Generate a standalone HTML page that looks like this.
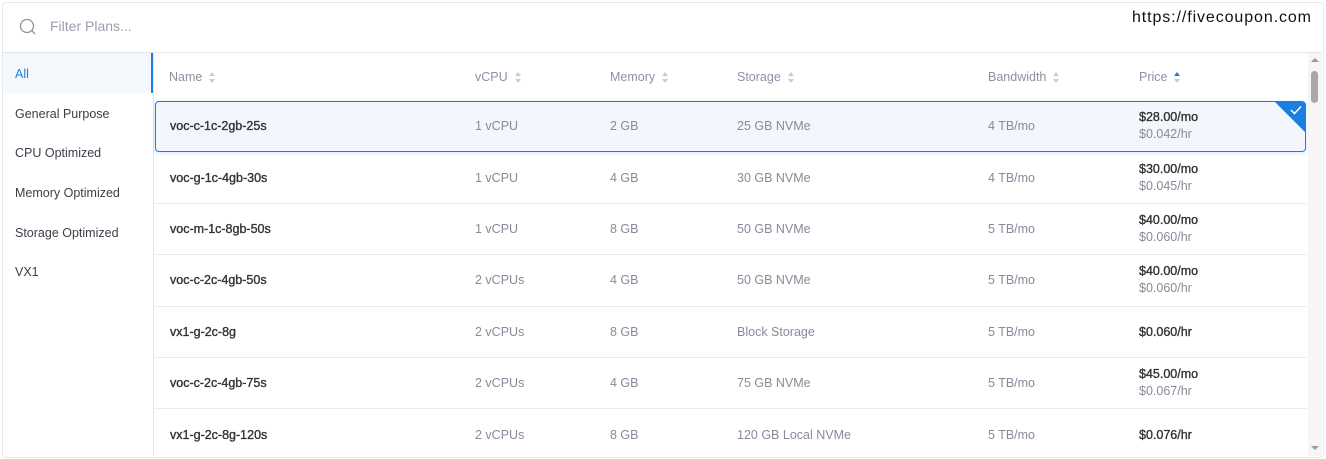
<!DOCTYPE html><html><head><style>
body{margin:0;width:1326px;height:459px;background:#fff;font-family:"Liberation Sans",sans-serif;font-size:12.5px;position:relative;overflow:hidden}
.a{position:absolute;white-space:nowrap}
.box{position:absolute;left:2px;top:2px;width:1320px;height:454px;border:1px solid #e6e8ec;border-radius:4px}
.g{color:#868b9a}.d{color:#333;-webkit-text-stroke:0.35px #333}
.h{color:#8c91a3}
.sep{position:absolute;left:154px;width:1153px;height:1px;background:#e9ebef}
.s{display:inline-block;vertical-align:middle;margin-left:7px;width:6px;height:11px;position:relative}
.s:before,.s:after{content:"";position:absolute;left:0;border-left:3px solid transparent;border-right:3px solid transparent}
.s:before{top:0;border-bottom:4px solid #c9ccd4}.s:after{bottom:0;border-top:4px solid #c9ccd4}
.s.up:before{border-bottom-color:#1a7fe0}
</style></head><body>
<div class="box"></div>
<svg class="a" style="left:18px;top:17px" width="20" height="20" viewBox="0 0 20 20"><circle cx="9" cy="9" r="6.5" fill="none" stroke="#8f939e" stroke-width="1.3"/><line x1="13.7" y1="13.7" x2="17" y2="17" stroke="#8f939e" stroke-width="1.3"/></svg>
<div class="a" style="left:50px;top:18px;font-size:14px;color:#9aa0ae">Filter Plans...</div>
<div class="a" style="left:1132px;top:9px;font-size:16px;letter-spacing:0.9px;color:#111">https://fivecoupon.com</div>
<div class="a" style="left:3px;top:52px;width:1319px;height:1px;background:#e3e5ea"></div>
<div class="a" style="left:3px;top:53px;width:148px;height:40px;background:#f4f8fd"></div>
<div class="a" style="left:151px;top:53px;width:2px;height:40px;background:#1a7fe0"></div>
<div class="a" style="left:153px;top:53px;width:1px;height:403px;background:#e3e5ea"></div>
<div class="a" style="left:15px;top:67px;color:#1a7fe0">All</div>
<div class="a" style="left:15px;top:107px;color:#3b3f48">General Purpose</div>
<div class="a" style="left:15px;top:146px;color:#3b3f48">CPU Optimized</div>
<div class="a" style="left:15px;top:186px;color:#3b3f48">Memory Optimized</div>
<div class="a" style="left:15px;top:226px;color:#3b3f48">Storage Optimized</div>
<div class="a" style="left:15px;top:265px;color:#3b3f48">VX1</div>
<div class="a h" style="left:169px;top:70px">Name<span class="s"></span></div>
<div class="a h" style="left:475px;top:70px">vCPU<span class="s"></span></div>
<div class="a h" style="left:610px;top:70px">Memory<span class="s"></span></div>
<div class="a h" style="left:737px;top:70px">Storage<span class="s"></span></div>
<div class="a h" style="left:988px;top:70px">Bandwidth<span class="s"></span></div>
<div class="a h" style="left:1139px;top:70px">Price<span class="s up"></span></div>
<div class="a" style="left:155px;top:101px;width:1149px;height:49px;border:1px solid #1a7fe0;border-radius:4px;background:#f2f7fd;overflow:hidden;box-shadow:0 1px 4px rgba(26,127,224,.2)"><div class="a" style="right:0;top:0;width:0;height:0;border-left:30px solid transparent;border-top:30px solid #1a7fe0"></div><svg class="a" style="right:3px;top:3px" width="12" height="10"><path d="M1 5 L4.5 8.5 L11 1.5" stroke="#fff" stroke-width="1.5" fill="none"/></svg></div>
<div class="sep" style="top:203px"></div><div class="sep" style="top:254px"></div><div class="sep" style="top:306px"></div><div class="sep" style="top:357px"></div><div class="sep" style="top:408px"></div>
<div class="a" style="left:1308px;top:53px;width:14px;height:403px;background:#f6f6f6"></div>
<div class="a" style="left:1311px;top:58px;border-left:4px solid transparent;border-right:4px solid transparent;border-bottom:4px solid #9a9a9a"></div>
<div class="a" style="left:1311px;top:71px;width:7px;height:32px;background:#a8a8a8;border-radius:4px"></div>
<div class="a" style="left:1311px;top:446px;border-left:4px solid transparent;border-right:4px solid transparent;border-top:4px solid #9a9a9a"></div>

<div class="a d" style="left:170px;top:119px">voc-c-1c-2gb-25s</div><div class="a g" style="left:475px;top:119px">1 vCPU</div><div class="a g" style="left:610px;top:119px">2 GB</div><div class="a g" style="left:737px;top:119px">25 GB NVMe</div><div class="a g" style="left:988px;top:119px">4 TB/mo</div><div class="a d" style="left:1139px;top:110px">$28.00/mo</div><div class="a g" style="left:1139px;top:127px">$0.042/hr</div>
<div class="a d" style="left:170px;top:171px">voc-g-1c-4gb-30s</div><div class="a g" style="left:475px;top:171px">1 vCPU</div><div class="a g" style="left:610px;top:171px">4 GB</div><div class="a g" style="left:737px;top:171px">30 GB NVMe</div><div class="a g" style="left:988px;top:171px">4 TB/mo</div><div class="a d" style="left:1139px;top:162px">$30.00/mo</div><div class="a g" style="left:1139px;top:179px">$0.045/hr</div>
<div class="a d" style="left:170px;top:222px">voc-m-1c-8gb-50s</div><div class="a g" style="left:475px;top:222px">1 vCPU</div><div class="a g" style="left:610px;top:222px">8 GB</div><div class="a g" style="left:737px;top:222px">50 GB NVMe</div><div class="a g" style="left:988px;top:222px">5 TB/mo</div><div class="a d" style="left:1139px;top:213px">$40.00/mo</div><div class="a g" style="left:1139px;top:230px">$0.060/hr</div>
<div class="a d" style="left:170px;top:273px">voc-c-2c-4gb-50s</div><div class="a g" style="left:475px;top:273px">2 vCPUs</div><div class="a g" style="left:610px;top:273px">4 GB</div><div class="a g" style="left:737px;top:273px">50 GB NVMe</div><div class="a g" style="left:988px;top:273px">5 TB/mo</div><div class="a d" style="left:1139px;top:264px">$40.00/mo</div><div class="a g" style="left:1139px;top:281px">$0.060/hr</div>
<div class="a d" style="left:170px;top:325px">vx1-g-2c-8g</div><div class="a g" style="left:475px;top:325px">2 vCPUs</div><div class="a g" style="left:610px;top:325px">8 GB</div><div class="a g" style="left:737px;top:325px">Block Storage</div><div class="a g" style="left:988px;top:325px">5 TB/mo</div><div class="a d" style="left:1139px;top:325px">$0.060/hr</div>
<div class="a d" style="left:170px;top:376px">voc-c-2c-4gb-75s</div><div class="a g" style="left:475px;top:376px">2 vCPUs</div><div class="a g" style="left:610px;top:376px">4 GB</div><div class="a g" style="left:737px;top:376px">75 GB NVMe</div><div class="a g" style="left:988px;top:376px">5 TB/mo</div><div class="a d" style="left:1139px;top:367px">$45.00/mo</div><div class="a g" style="left:1139px;top:384px">$0.067/hr</div>
<div class="a d" style="left:170px;top:428px">vx1-g-2c-8g-120s</div><div class="a g" style="left:475px;top:428px">2 vCPUs</div><div class="a g" style="left:610px;top:428px">8 GB</div><div class="a g" style="left:737px;top:428px">120 GB Local NVMe</div><div class="a g" style="left:988px;top:428px">5 TB/mo</div><div class="a d" style="left:1139px;top:428px">$0.076/hr</div>
</body></html>
